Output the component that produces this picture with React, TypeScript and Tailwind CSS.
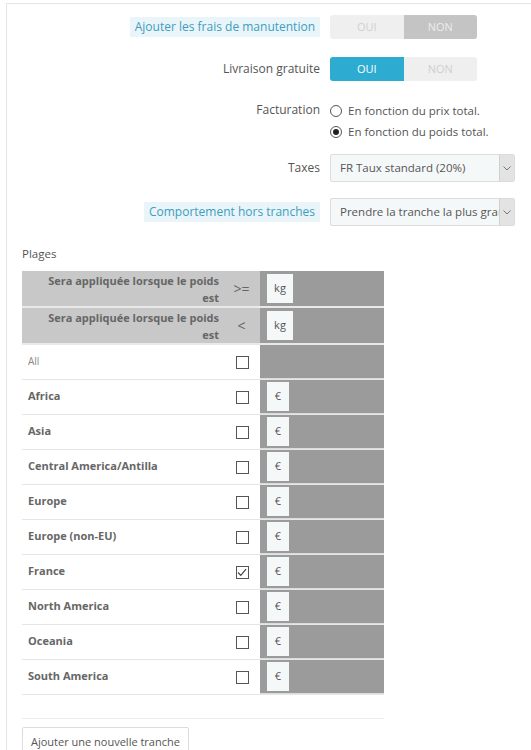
import React from "react";
import clsx from "clsx";

const ZONES = [
  { name: "Africa", checked: false },
  { name: "Asia", checked: false },
  { name: "Central America/Antilla", checked: false },
  { name: "Europe", checked: false },
  { name: "Europe (non-EU)", checked: false },
  { name: "France", checked: true },
  { name: "North America", checked: false },
  { name: "Oceania", checked: false },
  { name: "South America", checked: false },
];

function Label({ children, help }: { children: React.ReactNode; help?: boolean }) {
  return (
    <div className="flex w-[313px] shrink-0 justify-end">
      <span
        className={clsx(
          "text-[12px] leading-[20px]",
          help ? "bg-[#e9f5f9] px-[5px] text-[#3e9dc0]" : "text-[#555]"
        )}
      >
        {children}
      </span>
    </div>
  );
}

function Toggle({ on }: { on: boolean }) {
  return (
    <div className="flex h-[24px] w-[147px] overflow-hidden rounded-[3px] bg-[#efefef] text-[11px] leading-[24px]">
      <div
        className={clsx(
          "flex-1 text-center",
          on ? "bg-[#2eabd0] text-white" : "text-[#cfcfcf]"
        )}
      >
        OUI
      </div>
      <div
        className={clsx(
          "flex-1 text-center",
          on ? "text-[#cfcfcf]" : "bg-[#c4c4c4] text-[#ececec]"
        )}
      >
        NON
      </div>
    </div>
  );
}

function Radio({ checked, children }: { checked?: boolean; children: React.ReactNode }) {
  return (
    <div className="flex h-[21px] items-center gap-[6px] text-[11.5px] text-[#555]">
      <span className="flex h-[12px] w-[12px] items-center justify-center rounded-full border border-[#555] bg-white">
        {checked && <span className="h-[6px] w-[6px] rounded-full bg-[#222]" />}
      </span>
      {children}
    </div>
  );
}

function Select({ value }: { value: string }) {
  return (
    <div className="flex h-[28px] w-[185px] overflow-hidden rounded-[2px] border border-[#dcdcdc] bg-[#f5f8f9]">
      <div className="flex-1 overflow-hidden whitespace-nowrap pl-[9px] text-[11.5px] leading-[26px] text-[#555]">
        {value}
      </div>
      <div className="flex w-[15px] shrink-0 items-center justify-center border-l border-[#cfcfcf] bg-[#e3e3e3]">
        <svg width="8" height="5" viewBox="0 0 8 5" fill="none">
          <path d="M0.5 0.5L4 4L7.5 0.5" stroke="#777" strokeWidth="1" />
        </svg>
      </div>
    </div>
  );
}

function Checkbox({ checked }: { checked?: boolean }) {
  return (
    <span className="flex h-[13px] w-[13px] items-center justify-center border border-[#555] bg-white">
      {checked && (
        <svg width="10" height="9" viewBox="0 0 10 9" fill="none">
          <path d="M1 4.5L3.8 7.3L9 1.2" stroke="#444" strokeWidth="1.2" />
        </svg>
      )}
    </span>
  );
}

function UnitBox({ unit, w }: { unit: string; w: string }) {
  return (
    <div className={clsx("flex h-[29px] items-center justify-center bg-[#f5f8f9] text-[11px] text-[#555]", w)}>
      {unit}
    </div>
  );
}

function HeaderRow({ op }: { op: string }) {
  return (
    <div className="flex h-[37px] border-b-2 border-[#e9e9e9]">
      <div className="flex w-[238px] items-center bg-[#c8c8c8]">
        <div className="flex w-[201px] justify-end pr-[4px]">
          <div className="w-[180px] text-right text-[11px] font-bold leading-[17px] text-[#666]">
            Sera appliquée lorsque le poids est
          </div>
        </div>
        <div className="flex-1 text-center text-[14px] text-[#666]">{op}</div>
      </div>
      <div className="flex flex-1 items-center bg-[#9b9b9b] pl-[7px]">
        <UnitBox unit="kg" w="w-[26px]" />
      </div>
    </div>
  );
}

function ZoneRow({ name, checked, all }: { name: string; checked?: boolean; all?: boolean }) {
  return (
    <div className="flex h-[35px] border-b border-[#e6e6e6]">
      <div className="flex w-[238px] items-center">
        <div
          className={clsx(
            "w-[204px] pb-[2px] pl-[6px]",
            all ? "text-[10px] text-[#888]" : "text-[11px] font-bold text-[#666]"
          )}
        >
          {name}
        </div>
        <div className="flex flex-1 justify-center pr-[2px]">
          <Checkbox checked={checked} />
        </div>
      </div>
      <div className="flex flex-1 items-center border-b border-[#dcdcdc] bg-[#9b9b9b] pl-[7px]">
        {!all && <UnitBox unit="€" w="w-[22px]" />}
      </div>
    </div>
  );
}

export default function App() {
  return (
    <div className="min-h-screen bg-white pt-[3px] font-['Open_Sans',sans-serif]">
      <div className="ml-[6px] min-h-[750px] border-l border-t border-[#e5e5e5] pt-[11px]">
        <div className="flex items-center">
          <Label help>Ajouter les frais de manutention</Label>
          <div className="ml-[10px]">
            <Toggle on={false} />
          </div>
        </div>

        <div className="mt-[18px] flex items-center">
          <Label>Livraison gratuite</Label>
          <div className="ml-[10px]">
            <Toggle on />
          </div>
        </div>

        <div className="mt-[19px] flex items-start">
          <Label>Facturation</Label>
          <div className="ml-[10px]">
            <Radio>En fonction du prix total.</Radio>
            <Radio checked>En fonction du poids total.</Radio>
          </div>
        </div>

        <div className="mt-[12px] flex items-center">
          <Label>Taxes</Label>
          <div className="ml-[10px]">
            <Select value="FR Taux standard (20%)" />
          </div>
        </div>

        <div className="mt-[16px] flex items-center">
          <Label help>Comportement hors tranches</Label>
          <div className="ml-[10px]">
            <Select value="Prendre la tranche la plus grande" />
          </div>
        </div>

        <div className="ml-[15px] mt-[19px] w-[362px]">
          <div className="mb-[8px] text-[11.5px] leading-[18px] text-[#555]">Plages</div>
          <HeaderRow op=">=" />
          <HeaderRow op="<" />
          <ZoneRow name="All" all />
          {ZONES.map((z) => (
            <ZoneRow key={z.name} name={z.name} checked={z.checked} />
          ))}
          <div className="mt-[23px] border-t border-[#ececec] pt-[8px]">
            <button className="h-[30px] rounded-[2px] border border-[#dcdcdc] bg-white px-[8px] text-[11px] text-[#555]">
              Ajouter une nouvelle tranche
            </button>
          </div>
        </div>
      </div>
    </div>
  );
}
